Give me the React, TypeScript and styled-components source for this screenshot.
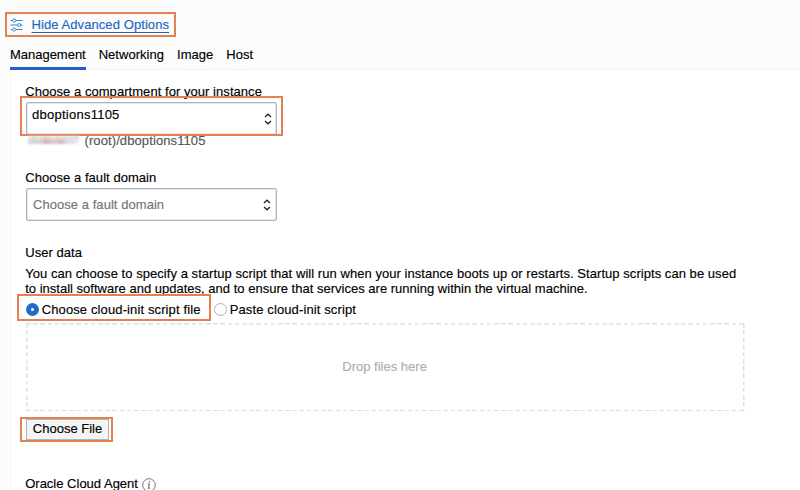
import React from "react";
import styled, { createGlobalStyle } from "styled-components";

const Global = createGlobalStyle`
  * { box-sizing: border-box; }
  body {
    margin: 0;
    background: #fcfcfc;
    font: 13px/15px "Liberation Sans", Arial, sans-serif;
    color: #000;
    -webkit-text-stroke: 0.15px;
    overflow: hidden;
  }
`;
const Page = styled.main`
  width: 800px;
  height: 490px;
  padding-top: 12px;
  display: flex;
  flex-direction: column;
  overflow: hidden;
`;
const AdvancedToggle = styled.div`
  width: 171px;
  height: 25px;
  flex: none;
  margin-left: 5px;
  padding: 0 0 1px 3px;
  border: 2px solid #e5804f;
  display: flex;
  align-items: center;
  gap: 8.5px;
`;
const SlidersIcon = styled.svg`
  flex: none;
  margin-top: 2px;
`;
const ToggleLink = styled.a`
  color: #2268c4;
  text-decoration: underline;
  text-decoration-thickness: 1px;
  text-underline-offset: 3px;
  white-space: nowrap;
  letter-spacing: 0.08px;
`;
const Tabs = styled.nav`
  position: relative;
  z-index: 1;
  display: flex;
  gap: 13px;
  height: 33px;
  padding: 10px 0 0 10px;
  flex: none;
`;
const Tab = styled.div<{ $active?: boolean }>`
  height: 23px;
  white-space: nowrap;
  letter-spacing: ${(p) => (p.$active ? -0.02 : 0.03)}px;
  border-bottom: ${(p) => (p.$active ? "3px solid #1c63c4" : "1px solid #f2f2f2")};
`;
const Panel = styled.section`
  flex: 1;
  margin: -1px 0 0 10px;
  padding: 14px 0 0 15px;
  border: 1px solid #f4f4f4;
  border-width: 1px 0 0 1px;
  background: #fff;
  background-clip: padding-box;
`;
const Line = styled.div<{ $height: number; $spacing?: number }>`
  height: ${(p) => p.$height}px;
  margin-left: -0.8px;
  letter-spacing: ${(p) => p.$spacing ?? 0.05}px;
  white-space: nowrap;
`;
const Highlighted = styled.div<{ $width: number }>`
  position: relative;
  width: ${(p) => p.$width}px;
`;
const Outline = styled.div<{ $inset: string }>`
  position: absolute;
  inset: ${(p) => p.$inset};
  border: 2px solid #e5804f;
  pointer-events: none;
`;
const Select = styled.div<{ $muted?: boolean }>`
  display: flex;
  align-items: center;
  justify-content: space-between;
  width: 251px;
  height: 33px;
  padding: 0 ${(p) => (p.$muted ? 5 : 4)}px 0 ${(p) => (p.$muted ? 6 : 5)}px;
  border: 1px solid #adb3bd;
  border-radius: 2px;
  box-shadow: inset 0 0 0 0.5px #c9cdd3;
  background: #fff;
  color: ${(p) => (p.$muted ? "#757575" : "#000")};
`;
const SelectValue = styled.span<{ $raise?: number; $spacing?: number }>`
  padding-bottom: ${(p) => p.$raise ?? 0}px;
  letter-spacing: ${(p) => p.$spacing ?? 0.05}px;
`;
const PathRow = styled.div`
  display: flex;
  gap: 5.5px;
  height: 37px;
  margin-top: -2px;
  padding-left: 2px;
  color: #555;
  letter-spacing: 0.1px;
`;
const RedactedName = styled.svg`
  flex: none;
  margin-top: 3px;
  filter: blur(0.8px);
`;
const Options = styled.div`
  display: flex;
  align-items: center;
  gap: 14px;
  height: 27px;
  padding-bottom: 1px;
`;
const Option = styled.div<{ $width: number }>`
  position: relative;
  display: flex;
  align-items: center;
  gap: 2.7px;
  width: ${(p) => p.$width}px;
  white-space: nowrap;
  letter-spacing: 0.12px;
`;
const Radio = styled.span<{ $checked?: boolean }>`
  width: 13px;
  height: 13px;
  flex: none;
  border-radius: 50%;
  border: ${(p) => (p.$checked ? "5px solid #226bca" : "1px solid #adb3bb")};
  background: #fff;
`;
const dashX = "repeating-linear-gradient(90deg, #e0e0e0 0 4.6px, transparent 4.6px 7.2px)";
const dashY = "repeating-linear-gradient(180deg, #e0e0e0 0 4.6px, transparent 4.6px 7.2px)";
const DropArea = styled.div`
  display: flex;
  align-items: center;
  justify-content: center;
  width: 719px;
  height: 88px;
  margin-left: -0.4px;
  padding: 0 1px 1px 0;
  color: #a9aeb6;
  background:
    ${dashX} 0 0 / 100% 1.5px no-repeat,
    ${dashX} 0 100% / 100% 1.5px no-repeat,
    ${dashY} 0 0 / 1.5px 100% no-repeat,
    ${dashY} 100% 0 / 1.5px 100% no-repeat;
`;
const FileButtonSlot = styled(Highlighted)`
  margin: 8px 0 37px;
`;
const FileButton = styled.div`
  width: 83px;
  height: 21px;
  line-height: 17px;
  text-align: center;
  border: 1px solid #aeb6c0;
  background: #f4f4f4;
`;
const Agent = styled.div`
  display: flex;
  gap: 4px;
  height: 13px;
  line-height: 14px;
  white-space: nowrap;
  margin-left: -0.8px;
`;
const AgentIcon = styled.svg`
  flex: none;
  margin-top: 1px;
`;

const Chevrons = ({ drop = 0 }: { drop?: number }) => (
  <svg width="8" height={12 + drop * 2} viewBox={`0 ${-drop * 2} 8 ${12 + drop * 2}`} fill="none" stroke="#222" strokeWidth="1.3">
    <path d="M1 4L4 1.2L7 4M1 8L4 10.8L7 8" />
  </svg>
);

const mosaic = [
  ["#e6e3e5", "#d8d5dc", "#e8ded9", "#d5dae1", "#dfcfcc", "#d4d7de", "#ecdfdc", "#d9d4df", "#ead8d3", "#d5dbe1", "#e4dde1", "#dfe2e6", "#d9d7dd"],
  ["#d4d3d9", "#dacfce", "#cdd3da", "#dcc9c8", "#d2a9a7", "#cbbcc8", "#dabdb8", "#d5c3cd", "#c9b5b3", "#d5d0d8", "#d9e0e6", "#ead9d5", "#eceef2"],
];

export default function App() {
  return (
    <Page>
      <Global />
      <AdvancedToggle>
        <SlidersIcon width="13" height="14" viewBox="0 0 13 14" fill="none" stroke="#4283cf" strokeWidth="1">
          <path d="M0.5 2.5h2M6 2.5h6.5M0.5 7h7M11 7h1.5M0.5 11.5h2M6 11.5h6.5" />
          <circle cx="4.2" cy="2.5" r="1.5" />
          <circle cx="9.2" cy="7" r="1.5" />
          <circle cx="4.2" cy="11.5" r="1.5" />
        </SlidersIcon>
        <ToggleLink>Hide Advanced Options</ToggleLink>
      </AdvancedToggle>
      <Tabs>
        <Tab $active>Management</Tab>
        <Tab>Networking</Tab>
        <Tab>Image</Tab>
        <Tab>Host</Tab>
      </Tabs>
      <Panel>
        <Line $height={18} $spacing={0.05}>Choose a compartment for your instance</Line>
        <Highlighted $width={251}>
          <Select>
            <SelectValue $raise={8} $spacing={0.25}>dboptions1105</SelectValue>
            <Chevrons />
          </Select>
          <Outline $inset="-6px -6px -1px -6px" />
        </Highlighted>
        <PathRow>
          <RedactedName width="51" height="8" viewBox="0 0 52 8" preserveAspectRatio="none">
            {mosaic.map((row, y) =>
              row.map((fill, x) => <rect key={`${x}-${y}`} x={x * 4} y={y * 4} width="4" height="4" fill={fill} />)
            )}
          </RedactedName>
          <span>(root)/dboptions1105</span>
        </PathRow>
        <Line $height={18}>Choose a fault domain</Line>
        <Select $muted>
          <SelectValue $raise={1}>Choose a fault domain</SelectValue>
          <Chevrons />
        </Select>
        <Line $height={24} />
        <Line $height={21}>User data</Line>
        <Line $height={15}>You can choose to specify a startup script that will run when your instance boots up or restarts. Startup scripts can be used</Line>
        <Line $height={15} $spacing={0.01}>to install software and updates, and to ensure that services are running within the virtual machine.</Line>
        <Options>
          <Option $width={174}>
            <Radio $checked />
            Choose cloud-init script file
            <Outline $inset="-8px -11px -4px -9px" />
          </Option>
          <Option $width={150}>
            <Radio />
            Paste cloud-init script
          </Option>
        </Options>
        <DropArea>Drop files here</DropArea>
        <FileButtonSlot $width={83}>
          <FileButton>Choose File</FileButton>
          <Outline $inset="-2px -4px -2px -6px" />
        </FileButtonSlot>
        <Agent>
          Oracle Cloud Agent
          <AgentIcon width="14" height="14" viewBox="0 0 14 14" fill="none" stroke="#777">
            <circle cx="7" cy="7" r="6.3" />
            <path d="M7.7 3v1.5M5.6 6h1.7L6.4 10.2h1.7" strokeWidth="1.2" />
          </AgentIcon>
        </Agent>
      </Panel>
    </Page>
  );
}
